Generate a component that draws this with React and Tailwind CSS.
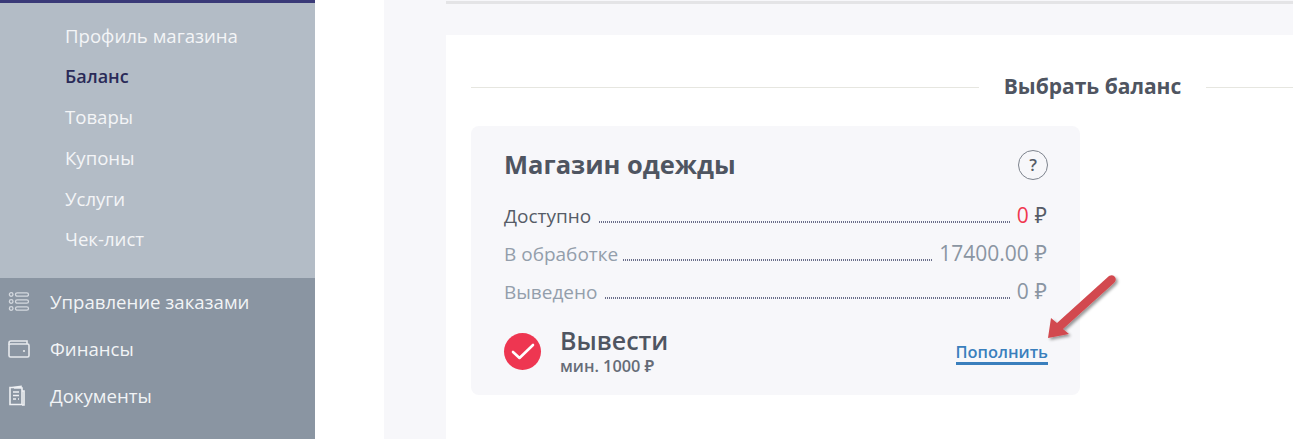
function Row({ label, value, labelCls, unitCls, valueCls, gapCls = "ml-[8px]" }) {
  return (
    <div className="flex items-end h-[38px]">
      <span className={`text-[19px] leading-[26px] ${labelCls}`}>{label}</span>
      <span className={`flex-1 ${gapCls} mr-[6px] mb-[6px] h-[2px] bg-[repeating-linear-gradient(90deg,#6a6e8a_0,#6a6e8a_1px,transparent_1px,transparent_2px)]`} />
      <span className={`text-[21px] leading-[28px] ${valueCls}`}>{value}</span>
      <span className={`text-[21px] leading-[28px] ml-[6px] ${unitCls}`}>₽</span>
    </div>
  );
}
const sub = ["Профиль магазина", "Баланс", "Товары", "Купоны", "Услуги", "Чек-лист"];
const icons = {
  list: (
    <svg width="22" height="22" viewBox="0 0 22 22" fill="none" stroke="#d4d9df" strokeWidth="1.3">
      <circle cx="3.2" cy="3.5" r="1.8" /><circle cx="3.2" cy="10.5" r="1.8" /><circle cx="3.2" cy="17.5" r="1.8" />
      <rect x="7.5" y="1.8" width="13" height="3.4" rx="1.7" /><rect x="7.5" y="8.8" width="13" height="3.4" rx="1.7" /><rect x="7.5" y="15.8" width="13" height="3.4" rx="1.7" />
    </svg>
  ),
  wallet: (
    <svg width="22" height="20" viewBox="0 0 22 20" fill="none" stroke="#e6e9ed" strokeWidth="1.6">
      <path d="M1 6V4a2 2 0 0 1 2-2h16v3" /><rect x="1" y="5" width="20" height="13" rx="1.5" />
      <circle cx="16" cy="12" r="1.1" fill="#e6e9ed" stroke="none" />
    </svg>
  ),
  doc: (
    <svg width="18" height="22" viewBox="0 0 18 22" fill="none" stroke="#eef0f3" strokeWidth="1.6">
      <path d="M13 3V1.5L4 2.5H2v17h12V3H6" /><path d="M14 6h2v14h-2" /><path d="M5 7h6M5 10.5h6M5 14h3M10 14h1" />
    </svg>
  ),
};
export default function App() {
  return (
    <div className="relative flex w-[1296px] h-[439px] overflow-hidden bg-white pr-[3px] font-['Open_Sans','Noto_Sans',sans-serif]">
      <aside className="w-[315px] flex flex-col shrink-0">
        <div className="h-[3px] bg-[#3a3a78]" />
        <div className="h-[275px] bg-[#b3bcc6] pt-[12.5px] pl-[65px]">
          {sub.map((s) => (
            <div key={s} className={`h-[40.8px] leading-[40px] ${s === "Баланс" ? "text-[#2a2a58] font-semibold text-[18px]" : "text-[#f4f5f7] text-[18.6px]"}`}>{s}</div>
          ))}
        </div>
        <div className="flex-1 bg-[#8a95a2]">
          {[["list", "Управление заказами"], ["wallet", "Финансы"], ["doc", "Документы"]].map(([i, t]) => (
            <div key={t} className="h-[47px] flex items-center text-[18.6px] text-[#f2f4f6]">
              <span className="w-[50px] pl-[8px] flex items-center">{icons[i]}</span>
              <span>{t}</span>
            </div>
          ))}
        </div>
      </aside>
      <main className="ml-[69px] flex-1 bg-[#f7f7fa] pl-[62px]">
        <div className="mt-[1px] h-[3px] bg-[#e4e4e6]" />
        <section className="mt-[31px] bg-white h-[404px] pl-[25px]">
          <div className="flex items-center pt-[40px] h-[65px]">
            <div className="w-[508px] h-px bg-[#e6e6e0]" />
            <h2 className="w-[227px] -mt-[3px] text-center text-[21px] font-bold text-[#4f5561] leading-[26px]">Выбрать баланс</h2>
            <div className="flex-1 h-px bg-[#e6e6e0]" />
          </div>
          <div className="mt-[26px] w-[609px] h-[269px] rounded-[8px] bg-[#f7f7fa] pl-[33px] pr-[33px] pt-[20px]">
            <div className="flex items-center justify-between h-[38px]">
              <h3 className="text-[25.5px] -mt-[2px] font-bold text-[#4f5561] leading-[36px]">Магазин одежды</h3>
              <span className="w-[30px] h-[30px] -mr-[1px] rounded-full border-[1.5px] border-[#7d838d] flex items-center justify-center text-[17px] font-semibold text-[#555b66]">?</span>
            </div>
            <div className="mt-[7px]">
              <Row label="Доступно" value="0" labelCls="text-[#565c67]" valueCls="text-[#f0384f]" unitCls="text-[#565c67]" />
              <Row label="В обработке" value="17400.00" gapCls="ml-[5px]" labelCls="text-[#939eab]" valueCls="text-[#8a95a2]" unitCls="text-[#8a95a2]" />
              <Row label="Выведено" value="0" gapCls="ml-[7px]" labelCls="text-[#939eab]" valueCls="text-[#8a95a2]" unitCls="text-[#8a95a2]" />
            </div>
            <div className="flex items-center mt-[20px]">
              <span className="w-[37px] h-[37px] shrink-0 rounded-full bg-[#ee3651] flex items-center justify-center">
                <svg width="24" height="17" viewBox="0 0 24 17" fill="none" stroke="#fff" strokeWidth="2.6" strokeLinecap="round" strokeLinejoin="round"><path d="M2 9l6.5 6L22 2" /></svg>
              </span>
              <div className="ml-[19px] flex-1">
                <div className="text-[25px] leading-[30px] font-semibold text-[#4f5561]">Вывести</div>
                <div className="text-[16.3px] leading-[22px] font-semibold text-[#666c77]">мин. 1000 ₽</div>
              </div>
              <a className="self-end mb-[12px] -mr-[1px] text-[16.4px] leading-[20px] font-semibold text-[#3a7fbd] border-b-[3px] border-[#3a7fbd]">Пополнить</a>
            </div>
          </div>
        </section>
      </main>
      <svg className="absolute left-[1040px] top-[272px]" width="84" height="76" viewBox="0 0 84 76" fill="none">
        <defs><filter id="s" x="-20%" y="-20%" width="150%" height="150%"><feDropShadow dx="2" dy="2" stdDeviation="1.5" floodColor="#000" floodOpacity="0.4" /></filter></defs>
        <path d="M8 66L11 46L17 51L69 4Q73 2 75 5Q77 8 74 11L23 57L29 62Z" fill="#d24a4f" filter="url(#s)" />
      </svg>
    </div>
  );
}
